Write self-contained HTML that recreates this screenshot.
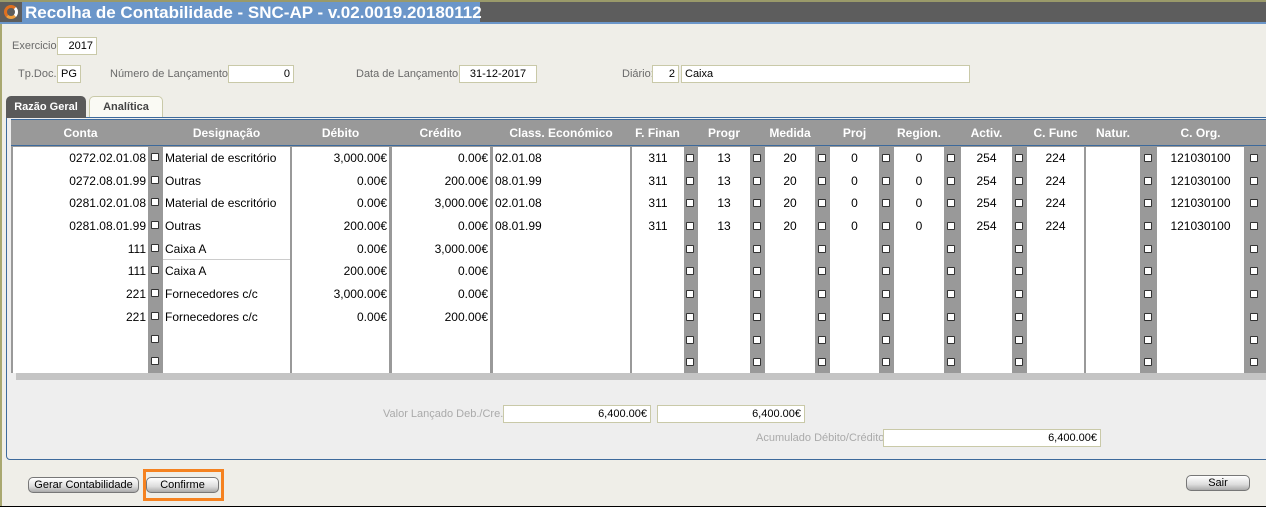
<!DOCTYPE html>
<html><head><meta charset="utf-8"><style>
*{margin:0;padding:0;box-sizing:border-box}
body{width:1266px;height:510px;background:#efeee8;position:relative;overflow:hidden;font-family:"Liberation Sans",Arial,sans-serif;font-size:12px;color:#000}
.a{position:absolute}
.lbl{position:absolute;font-size:11px;color:#6a6a6a}
.in{position:absolute;background:#fff;border:1px solid #c9c9a8;font-size:11px;height:18px;line-height:16px;padding:0 3px}
.col{position:absolute;top:147px;height:226px;background:#fff}
.col div{height:22.7px;line-height:23.5px;white-space:nowrap;padding:0 2px}
.r{text-align:right}.c{text-align:center}
.ck{position:absolute;top:147px;width:9px}
.ck i{display:block;width:8px;height:8px;background:#fff;border:1px solid #333;border-radius:1px;margin-bottom:14.7px}
.h{position:absolute;top:121px;height:24px;line-height:24px;text-align:center;color:#fff;font-weight:bold;font-size:12px}
.btn{position:absolute;height:16px;border:1px solid #777;border-radius:5px;background:linear-gradient(#fff,#ddd 60%,#aaa);font-size:11px;text-align:center;line-height:14px}
</style></head><body>
<div class="a" style="left:0;top:0;width:1266px;height:2px;background:#9a9a6a"></div>
<div class="a" style="left:0;top:2px;width:1266px;height:20px;background:#5d5d5d"></div>
<div class="a" style="left:22px;top:2px;width:458px;height:20px;background:#6b96c9"></div>
<div class="a" style="left:0;top:22px;width:1266px;height:2px;background:#6b96c9"></div>
<div class="a" style="left:4px;top:5px;width:14px;height:14px;border-radius:50%;border:3px solid #e07020;border-right-color:#fff;border-bottom-color:#f0a040"></div>
<div class="a" style="left:25px;top:3px;font-size:17px;font-weight:bold;color:#fff;letter-spacing:0">Recolha de Contabilidade - SNC-AP - v.02.0019.20180112</div>
<div class="a" style="left:0;top:24px;width:2px;height:486px;background:#a9a870"></div>

<div class="lbl" style="left:12px;top:40px">Exercicio</div>
<div class="in r" style="left:57px;top:37px;width:40px">2017</div>
<div class="lbl" style="left:18px;top:68px">Tp.Doc.</div>
<div class="in" style="left:57px;top:65px;width:24px">PG</div>
<div class="lbl" style="left:110px;top:68px">Número de Lançamento:</div>
<div class="in r" style="left:228px;top:65px;width:66px">0</div>
<div class="lbl" style="left:356px;top:68px">Data de Lançamento:</div>
<div class="in c" style="left:459px;top:65px;width:78px">31-12-2017</div>
<div class="lbl" style="left:622px;top:68px">Diário:</div>
<div class="in r" style="left:652px;top:65px;width:27px">2</div>
<div class="in" style="left:681px;top:65px;width:289px">Caixa</div>

<div class="a" style="left:6px;top:117px;width:1262px;height:343px;background:#eee;border:1px solid #3d6a9c;border-radius:0 0 0 4px"></div>
<div class="a" style="left:6px;top:96px;width:80px;height:22px;background:#5a5a5a;border-radius:5px 5px 0 0;color:#fff;font-weight:bold;font-size:11px;line-height:22px;text-align:center">Razão Geral</div>
<div class="a" style="left:89px;top:96px;width:74px;height:21px;background:#fafaf4;border:1px solid #c9c9a8;border-bottom:none;border-radius:5px 5px 0 0;color:#444;font-weight:bold;font-size:11px;line-height:20px;text-align:center">Analítica</div>

<div class="a" style="left:16px;top:373px;width:1250px;height:7px;background:#c4c4c4"></div>
<div class="a" style="left:11px;top:119px;width:1255px;height:254px;background:#999;border-top:1px solid #3d6a9c"></div>
<div class="a" style="left:11px;top:145px;width:1255px;height:1px;background:#3d6a9c"></div>

<div class="h" style="left:12px;width:137px">Conta</div>
<div class="h" style="left:162px;width:129px">Designação</div>
<div class="h" style="left:291px;width:99px">Débito</div>
<div class="h" style="left:390px;width:101px">Crédito</div>
<div class="h" style="left:491px;width:140px">Class. Económico</div>
<div class="h" style="left:631px;width:53px">F. Finan</div>
<div class="h" style="left:697px;width:54px">Progr</div>
<div class="h" style="left:764px;width:52px">Medida</div>
<div class="h" style="left:829px;width:51px">Proj</div>
<div class="h" style="left:893px;width:52px">Region.</div>
<div class="h" style="left:960px;width:53px">Activ.</div>
<div class="h" style="left:1026px;width:59px">C. Func</div>
<div class="h" style="left:1085px;width:56px">Natur.</div>
<div class="h" style="left:1156px;width:89px">C. Org.</div>

<div class="col r" style="left:13px;width:135px"><div>0272.02.01.08</div><div>0272.08.01.99</div><div>0281.02.01.08</div><div>0281.08.01.99</div><div>111</div><div>111</div><div>221</div><div>221</div></div>
<div class="col" style="left:163px;width:127px"><div>Material de escritório</div><div>Outras</div><div>Material de escritório</div><div>Outras</div><div style="border-bottom:1px solid #ccc">Caixa A</div><div>Caixa A</div><div>Fornecedores c/c</div><div>Fornecedores c/c</div></div>
<div class="col r" style="left:292px;width:97px"><div>3,000.00€</div><div>0.00€</div><div>0.00€</div><div>200.00€</div><div>0.00€</div><div>200.00€</div><div>3,000.00€</div><div>0.00€</div></div>
<div class="col r" style="left:392px;width:98px"><div>0.00€</div><div>200.00€</div><div>3,000.00€</div><div>0.00€</div><div>3,000.00€</div><div>0.00€</div><div>0.00€</div><div>200.00€</div></div>
<div class="col" style="left:493px;width:137px"><div>02.01.08</div><div>08.01.99</div><div>02.01.08</div><div>08.01.99</div></div>
<div class="col c" style="left:632px;width:52px"><div>311</div><div>311</div><div>311</div><div>311</div></div>
<div class="col c" style="left:698px;width:52px"><div>13</div><div>13</div><div>13</div><div>13</div></div>
<div class="col c" style="left:765px;width:50px"><div>20</div><div>20</div><div>20</div><div>20</div></div>
<div class="col c" style="left:830px;width:49px"><div>0</div><div>0</div><div>0</div><div>0</div></div>
<div class="col c" style="left:894px;width:50px"><div>0</div><div>0</div><div>0</div><div>0</div></div>
<div class="col c" style="left:961px;width:51px"><div>254</div><div>254</div><div>254</div><div>254</div></div>
<div class="col c" style="left:1027px;width:57px"><div>224</div><div>224</div><div>224</div><div>224</div></div>
<div class="col" style="left:1086px;width:54px"></div>
<div class="col c" style="left:1157px;width:87px"><div>121030100</div><div>121030100</div><div>121030100</div><div>121030100</div></div>

<div class="ck" style="left:151px;top:153px"><i></i><i></i><i></i><i></i><i></i><i></i><i></i><i></i><i></i><i></i></div>
<div class="ck" style="left:686px;top:154px"><i></i><i></i><i></i><i></i><i></i><i></i><i></i><i></i><i></i><i></i></div>
<div class="ck" style="left:753px;top:154px"><i></i><i></i><i></i><i></i><i></i><i></i><i></i><i></i><i></i><i></i></div>
<div class="ck" style="left:818px;top:154px"><i></i><i></i><i></i><i></i><i></i><i></i><i></i><i></i><i></i><i></i></div>
<div class="ck" style="left:882px;top:154px"><i></i><i></i><i></i><i></i><i></i><i></i><i></i><i></i><i></i><i></i></div>
<div class="ck" style="left:947px;top:154px"><i></i><i></i><i></i><i></i><i></i><i></i><i></i><i></i><i></i><i></i></div>
<div class="ck" style="left:1015px;top:154px"><i></i><i></i><i></i><i></i><i></i><i></i><i></i><i></i><i></i><i></i></div>
<div class="ck" style="left:1144px;top:154px"><i></i><i></i><i></i><i></i><i></i><i></i><i></i><i></i><i></i><i></i></div>
<div class="ck" style="left:1250px;top:154px"><i></i><i></i><i></i><i></i><i></i><i></i><i></i><i></i><i></i><i></i></div>

<div class="lbl" style="left:383px;top:408px;color:#aaa">Valor Lançado Deb./Cre.</div>
<div class="in r" style="left:503px;top:405px;width:148px">6,400.00€</div>
<div class="in r" style="left:657px;top:405px;width:148px">6,400.00€</div>
<div class="lbl" style="left:756px;top:432px;color:#aaa">Acumulado Débito/Crédito:</div>
<div class="in r" style="left:883px;top:429px;width:218px">6,400.00€</div>

<div class="btn" style="left:28px;top:477px;width:111px">Gerar Contabilidade</div>
<div class="a" style="left:143px;top:469px;width:81px;height:32px;border:3px solid #f58220"></div>
<div class="btn" style="left:146px;top:477px;width:73px">Confirme</div>
<div class="btn" style="left:1186px;top:475px;width:64px">Sair</div>
<div class="a" style="left:0;top:506px;width:1266px;height:1px;background:#000"></div>
<div class="a" style="left:0;top:507px;width:1266px;height:3px;background:#fff"></div>
</body></html>
